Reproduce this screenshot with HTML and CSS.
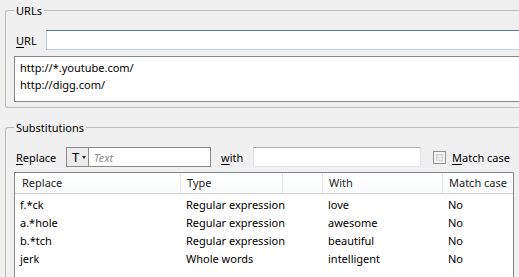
FILE: index.html
```html
<!DOCTYPE html>
<html>
<head>
<meta charset="utf-8">
<link rel="stylesheet" href="styles.css">
</head>
<body>
<div class="page">
  <fieldset class="group group-urls">
    <legend>URLs</legend>
    <div class="url-row">
      <label class="lbl lbl-url"><u>U</u>RL</label>
      <input class="textbox textbox-focus url-input" type="text">
    </div>
    <div class="url-list">
      <div class="url-item">http://*.youtube.com/</div>
      <div class="url-item">http://digg.com/</div>
    </div>
  </fieldset>

  <fieldset class="group group-subs">
    <legend>Substitutions</legend>
    <div class="replace-row">
      <label class="lbl lbl-replace"><u>R</u>eplace</label>
      <div class="combo">
        <div class="combo-type"><span class="combo-t">T</span><span class="combo-arrow"></span></div>
        <input class="combo-text" type="text" placeholder="Text">
      </div>
      <label class="lbl lbl-with"><u>w</u>ith</label>
      <input class="textbox with-input" type="text">
      <span class="checkbox"></span>
      <label class="lbl lbl-match"><u>M</u>atch case</label>
    </div>
    <div class="table">
      <div class="thead">
        <div class="th">Replace</div>
        <div class="th">Type</div>
        <div class="th"></div>
        <div class="th">With</div>
        <div class="th">Match case</div>
      </div>
      <div class="tbody">
        <div class="tr"><div class="td">f.*ck</div><div class="td td-type">Regular expression</div><div class="td">love</div><div class="td">No</div></div>
        <div class="tr"><div class="td">a.*hole</div><div class="td td-type">Regular expression</div><div class="td">awesome</div><div class="td">No</div></div>
        <div class="tr"><div class="td">b.*tch</div><div class="td td-type">Regular expression</div><div class="td">beautiful</div><div class="td">No</div></div>
        <div class="tr"><div class="td">jerk</div><div class="td td-type">Whole words</div><div class="td">intelligent</div><div class="td">No</div></div>
      </div>
    </div>
  </fieldset>
</div>
</body>
</html>
```
FILE: styles.css
```css
html, body {
  margin: 0;
  padding: 0;
}
body {
  width: 519px;
  height: 277px;
  overflow: hidden;
  background: #f0f0f0;
  font-family: "Noto Sans", "Open Sans", sans-serif;
  font-size: 11px;
  color: #000;
}
.page {
  width: 519px;
  height: 277px;
}
.group {
  box-sizing: border-box;
  width: 514px;
  margin: 3px 0 0 5px;
  border: 1px solid #bcbcbc;
  border-right: none;
  border-radius: 3px 0 0 3px;
  padding: 12px 0 5px 8px;
  min-width: 0;
}
.group legend {
  padding: 0 2px;
  line-height: 15px;
}
.group-subs {
  margin-top: 12px;
  height: 157px;
  border-bottom: none;
  border-radius: 3px 0 0 0;
  padding-bottom: 0;
}
.lbl {
  line-height: 15px;
  white-space: nowrap;
}
.lbl u {
  text-decoration-thickness: 1px;
  text-underline-offset: 2px;
}
.url-row {
  display: flex;
  align-items: center;
  height: 20px;
}
.lbl-url {
  margin-left: 2px;
  width: 30px;
}
.textbox {
  box-sizing: border-box;
  height: 20px;
  margin: 0;
  padding: 0 4px;
  font: inherit;
  background: #fff;
  border: 1px solid #e2e3ea;
  border-top-color: #abadb3;
  outline: none;
  appearance: none;
}
.textbox-focus {
  border-color: #b7d1e8;
  border-top-color: #4f7aa3;
  border-right: none;
}
.url-input {
  flex: 1;
  min-width: 0;
}
.url-list {
  box-sizing: border-box;
  height: 46px;
  margin-top: 6px;
  border: 1px solid #828790;
  border-right: none;
  background: #fff;
  padding: 2px 5px;
  line-height: 17px;
}
.replace-row {
  display: flex;
  align-items: center;
  height: 20px;
}
.lbl-replace {
  margin-left: 2px;
  width: 50px;
}
.combo {
  box-sizing: border-box;
  display: flex;
  width: 145px;
  height: 20px;
  border: 1px solid #8a8a8a;
  background: #fff;
}
.combo-type {
  box-sizing: border-box;
  width: 22px;
  display: flex;
  align-items: center;
  border-right: 1px solid #8a8a8a;
  background: #ececec;
  padding-left: 5px;
  font-size: 13px;
}
.combo-t {
  line-height: 18px;
}
.combo-arrow {
  margin-left: 3px;
  width: 0;
  height: 0;
  border-left: 2px solid transparent;
  border-right: 2px solid transparent;
  border-top: 3px solid #222;
}
.combo-text {
  flex: 1;
  min-width: 0;
  border: none;
  outline: none;
  margin: 0;
  padding: 0 5px;
  font: inherit;
  background: #fff;
}
.combo-text::placeholder {
  color: #8e8e8e;
  font-style: italic;
}
.lbl-with {
  margin-left: 10px;
  width: 32px;
}
.with-input {
  width: 168px;
}
.checkbox {
  box-sizing: border-box;
  width: 13px;
  height: 13px;
  margin-left: 12px;
  border: 1px solid #8e8f8f;
  background: linear-gradient(135deg, #dcdcdc, #f4f4f4);
  box-shadow: inset 0 0 0 2px #f4f4f4, inset 0 0 0 3px #d4d4d4;
}
.lbl-match {
  margin-left: 6px;
}
.table {
  box-sizing: border-box;
  width: 500px;
  height: 105px;
  margin-top: 5px;
  border: 1px solid #828790;
  border-bottom: none;
  background: #fff;
}
.thead {
  display: grid;
  grid-template-columns: 166px 102px 40px 120px 1fr;
  height: 21px;
  box-sizing: border-box;
  border-bottom: 1px solid #d5d5d5;
  background: linear-gradient(#ffffff, #fafbfc);
}
.th {
  box-sizing: border-box;
  border-right: 1px solid #e3e5e8;
  padding-left: 6px;
  line-height: 20px;
  color: #1e1e1e;
  white-space: nowrap;
  overflow: hidden;
}
.th:first-child {
  padding-left: 7px;
}
.th:last-child {
  border-right: none;
}
.tbody {
  padding-top: 2px;
}
.tr {
  display: grid;
  grid-template-columns: 166px 142px 120px 1fr;
  height: 18px;
  line-height: 18px;
}
.td {
  padding-left: 5px;
  white-space: nowrap;
  overflow: hidden;
}
```
